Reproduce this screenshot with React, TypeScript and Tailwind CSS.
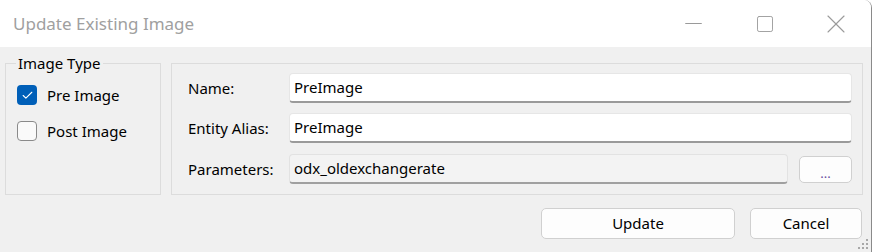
import { Check, Minus, Square, X } from "lucide-react";

const font = { fontFamily: '"Noto Sans", "Open Sans", sans-serif' };

function CheckRow({ label, checked }: { label: string; checked?: boolean }) {
  return (
    <label className="flex items-center gap-[10px] h-[20px] text-[15px] text-black">
      {checked ? (
        <span className="w-[20px] h-[20px] rounded-[4px] bg-[#005fb8] flex items-center justify-center">
          <Check size={13} strokeWidth={2} color="#ffffff" />
        </span>
      ) : (
        <span className="w-[20px] h-[20px] rounded-[4px] border border-[#8a8a8a] bg-[#fafafa]" />
      )}
      {label}
    </label>
  );
}

function Field({ label, value, className }: { label: string; value: string; className?: string }) {
  return (
    <div className={"flex items-center " + (className ?? "")}>
      <span className="w-[101px] text-[15px] text-black">{label}</span>
      <div className="flex-1 h-[30px] bg-white border border-[#e6e6e6] border-b-2 border-b-[#9a9a9a] rounded-[4px] flex items-center pl-[4px] text-[15px] text-black">
        {value}
      </div>
    </div>
  );
}

export default function App() {
  return (
    <div className="w-[874px] h-[252px] bg-white overflow-hidden" style={font}>
      <div className="relative w-[872px] h-[252px] flex flex-col border-r border-[#8a8a8a] rounded-t-[8px] overflow-hidden">
        {/* title bar */}
        <div className="h-[47px] bg-white flex items-center">
          <span className="pl-[13px] text-[17px] text-[#a0a0a0]">Update Existing Image</span>
          <div className="ml-auto flex h-full">
            <div className="w-[71px] flex items-center justify-center text-[#9a9a9a]">
              <Minus size={27} strokeWidth={0.9} />
            </div>
            <div className="w-[71px] flex items-center justify-center text-[#9a9a9a]">
              <Square size={20} strokeWidth={1.1} />
            </div>
            <div className="w-[71px] flex items-center justify-center text-[#9a9a9a]">
              <X size={32} strokeWidth={0.8} />
            </div>
          </div>
        </div>

        {/* body */}
        <div className="flex-1 bg-[#f0f0f0] flex flex-col">
          <div className="flex items-start pt-[6px] pl-[5px]">
            <fieldset className="w-[156px] h-[142px] border border-[#dcdcdc] px-[10px]">
              <legend className="px-[2px] text-[15px] text-black leading-[20px]">Image Type</legend>
              <div className="flex flex-col gap-[16px] pt-[12px] pl-[1px]">
                <CheckRow label="Pre Image" checked />
                <CheckRow label="Post Image" />
              </div>
            </fieldset>

            <div className="ml-[10px] mt-[10px] w-[692px] h-[132px] border border-[#dcdcdc] pt-[9px] pl-[16px] pr-[10px]">
              <Field label="Name:" value="PreImage" />
              <Field label="Entity Alias:" value="PreImage" className="mt-[10px]" />
              <div className="flex items-center mt-[11px]">
                <span className="w-[101px] text-[15px] text-black">Parameters:</span>
                <div className="w-[499px] h-[30px] bg-[#f3f3f3] border border-[#e2e2e2] border-b-2 border-b-[#a0a0a0] rounded-[4px] flex items-center pl-[4px] text-[15px] text-black">
                  odx_oldexchangerate
                </div>
                <button className="ml-[11px] w-[53px] h-[27px] bg-[#fdfdfd] border border-[#d0d0d0] rounded-[5px] text-[13px] text-[#6b4fa0] leading-none pt-[8px]">
                  ...
                </button>
              </div>
            </div>
          </div>

          <div className="flex justify-end gap-[15px] pr-[9px] mt-[13px]">
            <button className="w-[194px] h-[31px] bg-[#fdfdfd] border border-[#d0d0d0] rounded-[5px] text-[15px] text-black">
              Update
            </button>
            <button className="w-[112px] h-[31px] bg-[#fdfdfd] border border-[#d0d0d0] rounded-[5px] text-[15px] text-black">
              Cancel
            </button>
          </div>
        </div>

        {/* resize grip */}
        <svg className="absolute right-[2px] bottom-[2px]" width="12" height="12" viewBox="0 0 12 12">
          {[
            [10, 2],
            [6, 6],
            [10, 6],
            [2, 10],
            [6, 10],
            [10, 10],
          ].map(([x, y], i) => (
            <rect key={i} x={x - 1} y={y - 1} width="2" height="2" fill="#a8a8a8" />
          ))}
        </svg>
      </div>
    </div>
  );
}
